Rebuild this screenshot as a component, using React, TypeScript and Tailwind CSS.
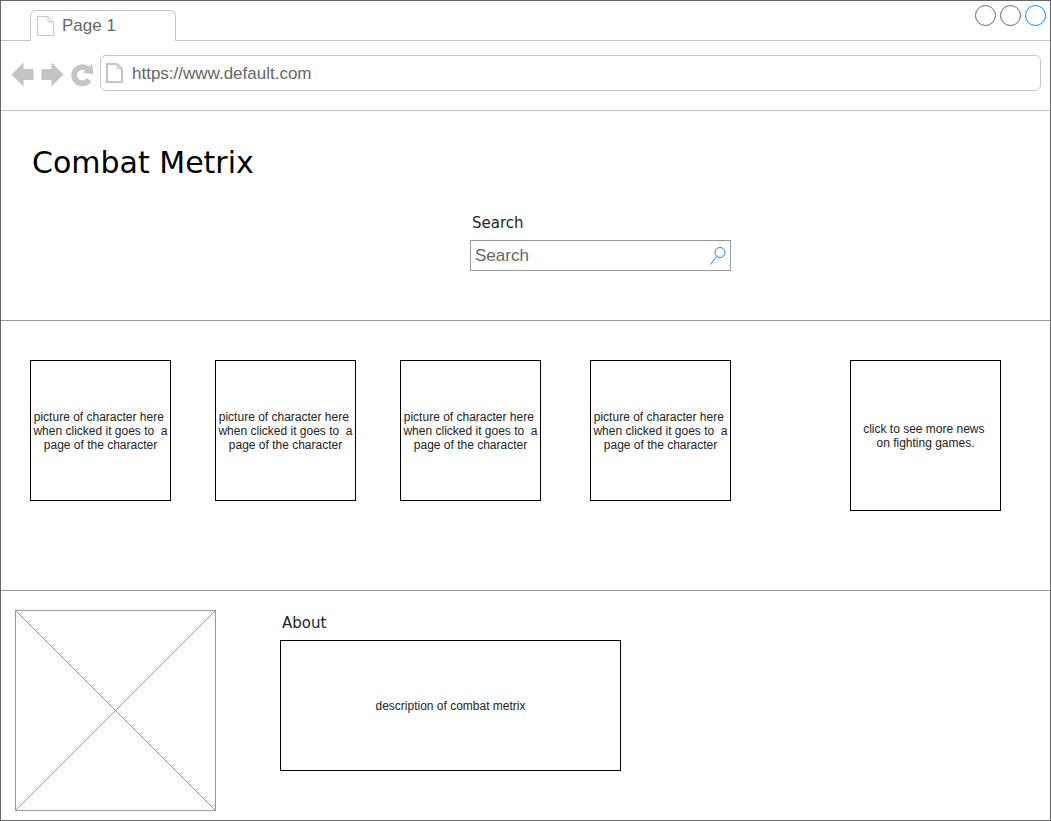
import React from "react";

const NBSP = "\u00a0";

const characters = [
  { id: 1, name: "Character 1" },
  { id: 2, name: "Character 2" },
  { id: 3, name: "Character 3" },
  { id: 4, name: "Character 4" },
];

function PageIcon({ className, strokeWidth }: { className: string; strokeWidth: number }) {
  const inset = strokeWidth / 2;
  const right = 17 - inset;
  const bottom = 20 - inset;
  return (
    <svg
      className={className}
      width="17"
      height="20"
      viewBox="0 0 17 20"
      fill="none"
      stroke="currentColor"
      aria-hidden="true"
    >
      <path
        d={`M${inset} ${inset}H11L${right} 6V${bottom}H${inset}Z`}
        strokeWidth={strokeWidth}
      />
      <path d={`M11 ${inset}V5.5H${right}`} strokeWidth="1" />
    </svg>
  );
}

function TabStrip() {
  return (
    <div className="flex h-10 items-stretch">
      <div className="w-[29px] shrink-0 border-b border-[#c4c4c4]" />
      <div className="mt-[9px] flex w-[146px] shrink-0 items-center gap-2 rounded-t-md border border-b-0 border-[#c4c4c4] px-1.5 text-[17px] leading-5 text-[#666666]">
        <PageIcon className="shrink-0 text-[#c4c4c4]" strokeWidth={1} />
        <span>Page 1</span>
      </div>
      <div className="flex flex-1 justify-end gap-1 border-b border-[#c4c4c4] pt-1 pr-1">
        <button type="button" aria-label="Minimize" className="size-[21px] rounded-full border border-[#666666]" />
        <button type="button" aria-label="Maximize" className="size-[21px] rounded-full border border-[#666666]" />
        <button type="button" aria-label="Close" className="size-[21px] rounded-full border border-[#008cff]" />
      </div>
    </div>
  );
}

function Toolbar() {
  return (
    <div className="flex h-[70px] items-start border-b border-[#c4c4c4] pt-3.5 pr-[9px] pl-2.5">
      <div className="flex h-9 shrink-0 items-center gap-[7px] pt-0.5 pr-1.5 text-[#c4c4c4]">
        <button type="button" aria-label="Back">
          <svg width="23" height="25" viewBox="0 0 23 25" fill="currentColor">
            <path d="M.5 12.5L12.5 .5V7H22.5V18H12.5V24.5Z" />
          </svg>
        </button>
        <button type="button" aria-label="Forward">
          <svg width="23" height="25" viewBox="0 0 23 25" fill="currentColor">
            <path d="M22.5 12.5L10.5 .5V7H.5V18H10.5V24.5Z" />
          </svg>
        </button>
        <button type="button" aria-label="Reload">
          <svg width="23" height="25" viewBox="0 0 23 25" fill="currentColor">
            <path d="M21 1.8L22.5 12.2L12 10.8L14.2 8.8A5.2 5.2 0 1 0 15.6 15.9L20.4 19.4A11 11 0 1 1 18.1 4.7Z" />
          </svg>
        </button>
      </div>
      <label className="flex h-9 flex-1 items-center gap-2 rounded-md border border-[#c4c4c4] px-[5px]">
        <PageIcon className="shrink-0 text-[#c4c4c4]" strokeWidth={2} />
        <input
          type="text"
          aria-label="Address"
          defaultValue="https://www.default.com"
          className="min-w-0 flex-1 bg-transparent pt-0.5 pl-px text-[17px] leading-5 text-[#666666] outline-none"
        />
      </label>
    </div>
  );
}

function SiteHeader() {
  return (
    <header className="min-h-[210px] border-b border-[#999999] pt-[34px]">
      <h1 className="pl-[31px] font-['DejaVu_Sans',sans-serif] text-[30px] leading-9">Combat Metrix</h1>
      <form
        role="search"
        className="mt-8 ml-[469px] w-[261px]"
        onSubmit={(event) => event.preventDefault()}
      >
        <label htmlFor="search" className="block pl-0.5 font-['DejaVu_Sans',sans-serif] text-[15px] leading-5 text-[#222222]">
          Search
        </label>
        <div className="mt-[7px] flex h-[31px] items-center border border-[#999999] px-1">
          <input
            id="search"
            type="text"
            placeholder="Search"
            className="min-w-0 flex-1 bg-transparent text-[17px] leading-5 text-[#666666] outline-none placeholder:text-[#666666]"
          />
          <button type="submit" aria-label="Search" className="text-[#008cff]">
            <svg width="16" height="18" viewBox="0 0 16 18" fill="none" stroke="currentColor">
              <circle cx="10" cy="5.5" r="5" />
              <path d="M6.5 9.5L.5 17.5" />
            </svg>
          </button>
        </div>
      </form>
    </header>
  );
}

function CharacterSection() {
  return (
    <section className="grid min-h-[270px] grid-cols-[185px_185px_190px_minmax(141px,1fr)_151px] items-start border-b border-[#999999] pt-[39px] pr-[49px] pl-[29px] text-xs leading-[14px] text-[#222222]">
      {characters.map((character) => (
        <button
          key={character.id}
          type="button"
          className="flex size-[141px] items-center justify-center border border-black text-center whitespace-pre"
        >
          {`picture of character here${NBSP}\nwhen clicked it goes to${NBSP} a\npage of the character`}
        </button>
      ))}
      <button
        type="button"
        className="flex size-[151px] items-center justify-center border border-black text-center whitespace-pre"
      >
        {`click to see more news${NBSP}\non fighting games.`}
      </button>
    </section>
  );
}

function SiteFooter() {
  return (
    <footer className="flex flex-1 items-start gap-16 pt-[19px] pb-[9px] pl-3.5 text-[#222222]">
      <div className="size-[201px] shrink-0 border border-[#999999]">
        <svg className="size-full" viewBox="0 0 199 199" fill="none" stroke="#999999" aria-hidden="true">
          <path d="M0 0L199 199M199 0L0 199" />
        </svg>
      </div>
      <section className="w-[341px]">
        <h2 className="pt-[3px] pl-0.5 font-['DejaVu_Sans',sans-serif] text-[15px] leading-5">About</h2>
        <p className="mt-[7px] flex h-[131px] items-center justify-center border border-black text-xs leading-[14px]">
          description of combat metrix
        </p>
      </section>
    </footer>
  );
}

export default function App() {
  return (
    <div className="flex min-h-screen flex-col border border-[#666666] bg-white font-['Liberation_Sans',Arial,sans-serif] text-black">
      <TabStrip />
      <Toolbar />
      <main className="flex flex-1 flex-col">
        <SiteHeader />
        <CharacterSection />
        <SiteFooter />
      </main>
    </div>
  );
}
